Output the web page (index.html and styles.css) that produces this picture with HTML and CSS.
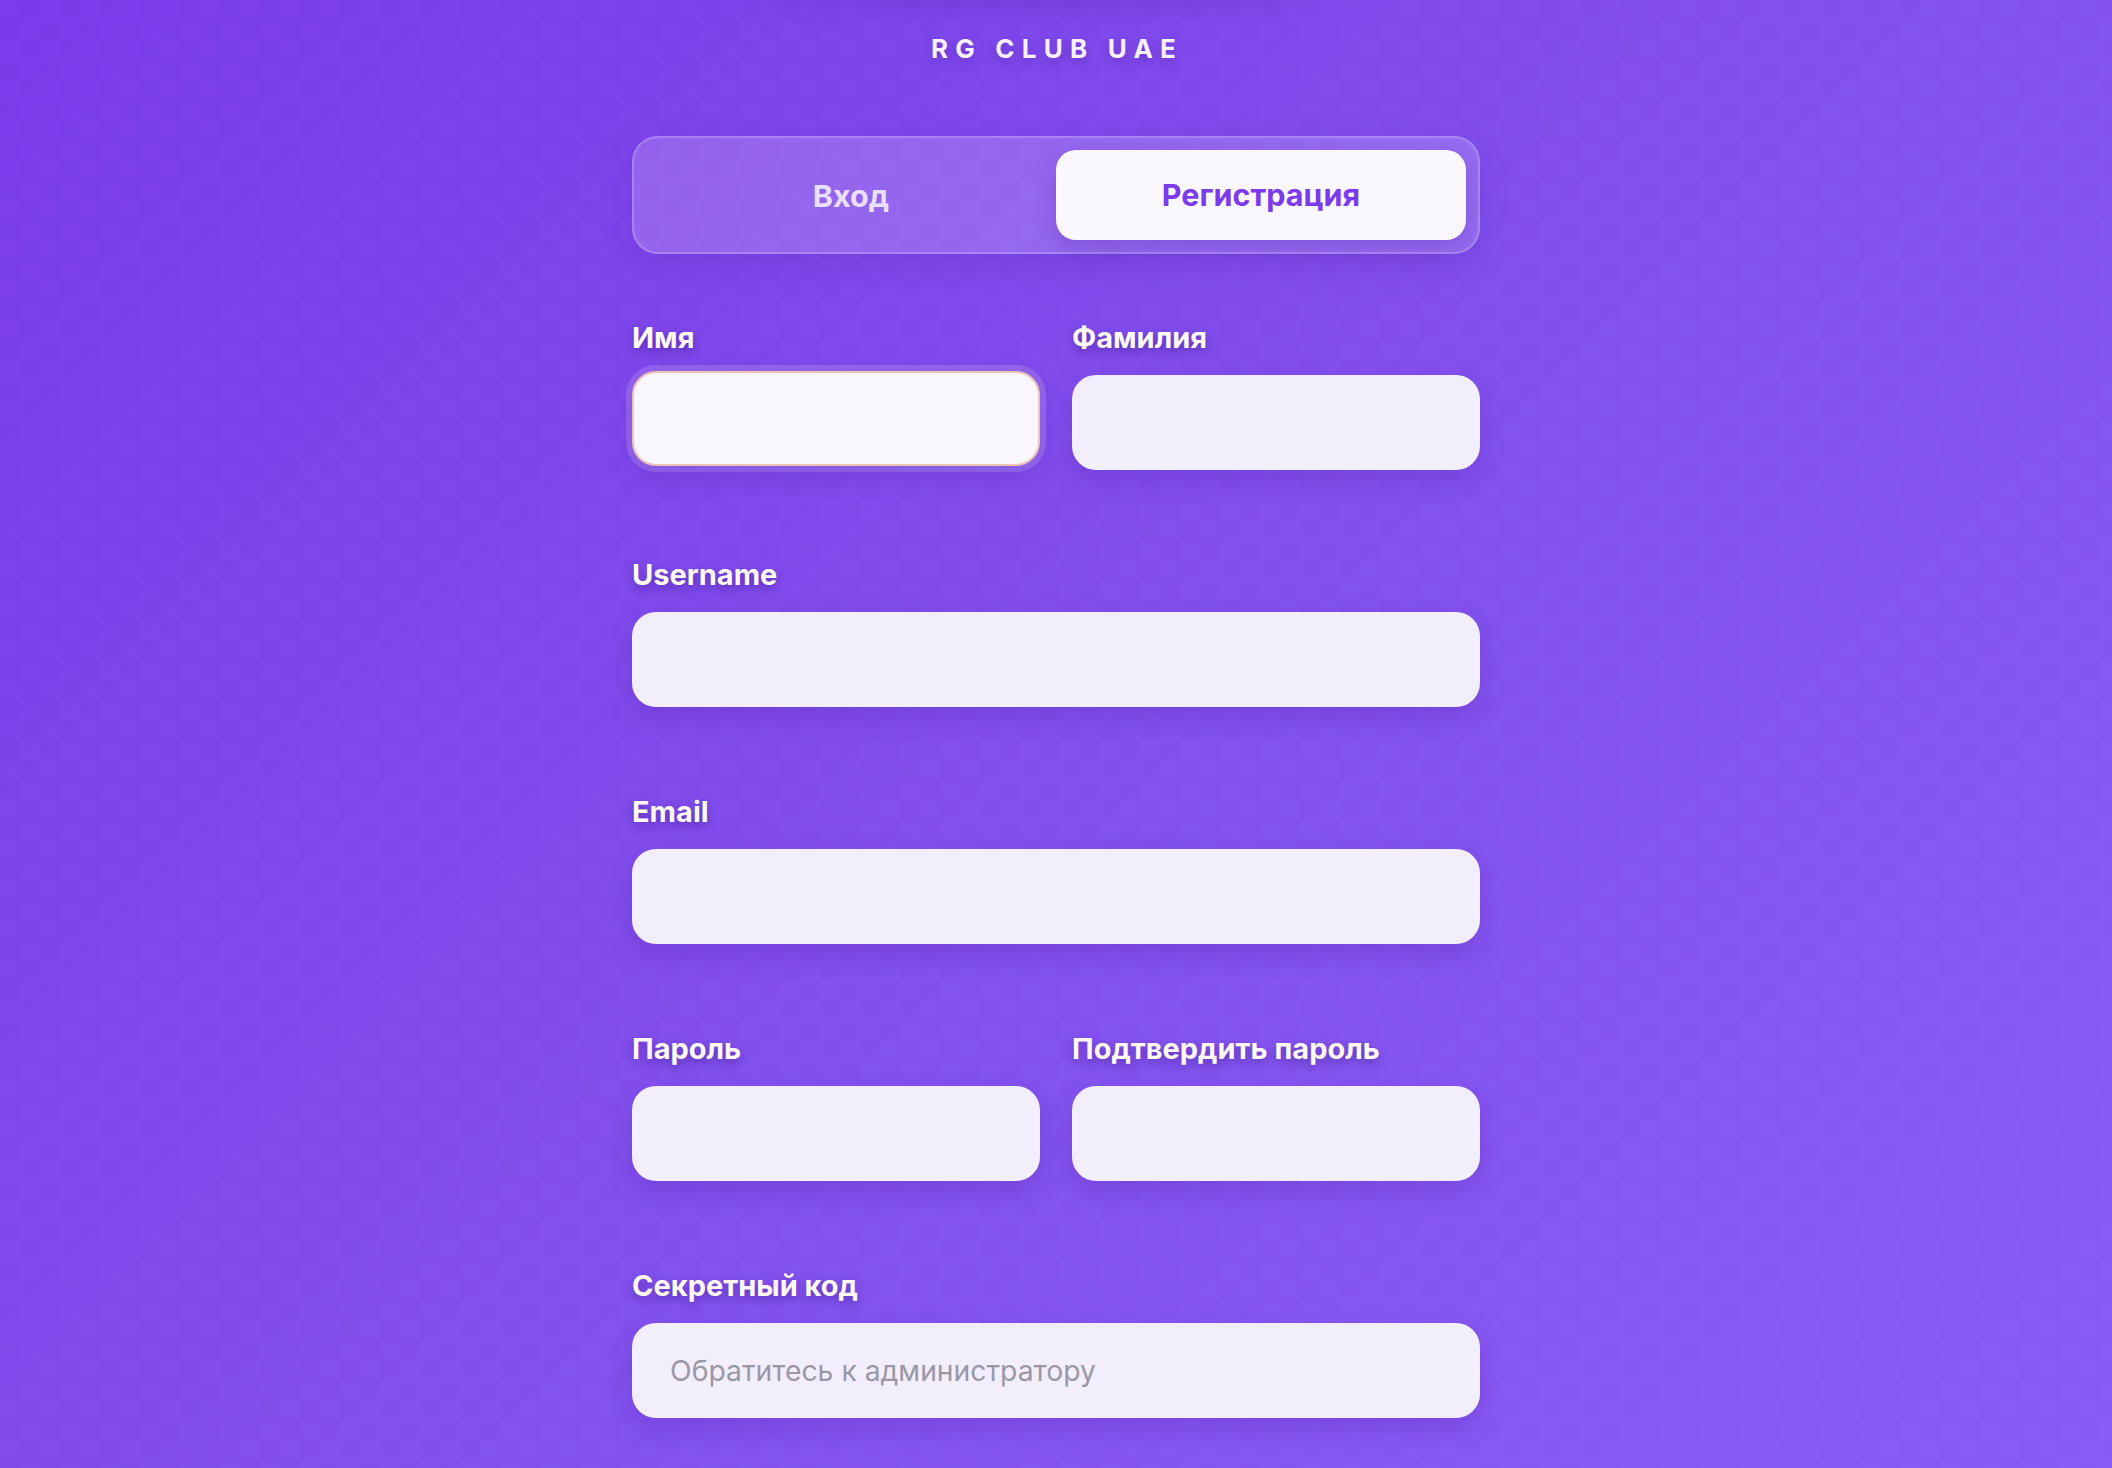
FILE: index.html
```html
<!DOCTYPE html>
<html lang="ru">
<head>
<meta charset="utf-8">
<title>RG CLUB UAE — Регистрация</title>
<link rel="stylesheet" href="styles.css">
</head>
<body>
<div class="page">
  <div class="top-glow"></div>
  <main class="auth">
    <div class="brand">RG CLUB UAE</div>
    <div class="tabs">
      <button class="tab">Вход</button>
      <button class="tab tab-active">Регистрация</button>
    </div>
    <form class="form">
      <div class="row two">
        <div class="field">
          <label class="label">Имя</label>
          <input class="input input-focus" type="text">
        </div>
        <div class="field">
          <label class="label">Фамилия</label>
          <input class="input" type="text">
        </div>
      </div>
      <div class="row">
        <div class="field">
          <label class="label">Username</label>
          <input class="input" type="text">
        </div>
      </div>
      <div class="row">
        <div class="field">
          <label class="label">Email</label>
          <input class="input" type="email">
        </div>
      </div>
      <div class="row two">
        <div class="field">
          <label class="label">Пароль</label>
          <input class="input" type="password">
        </div>
        <div class="field">
          <label class="label">Подтвердить пароль</label>
          <input class="input" type="password">
        </div>
      </div>
      <div class="row">
        <div class="field">
          <label class="label">Секретный код</label>
          <input class="input" type="text" placeholder="Обратитесь к администратору">
        </div>
      </div>
    </form>
  </main>
</div>
</body>
</html>
```
FILE: styles.css
```css
* { box-sizing: border-box; }
html, body {
  margin: 0;
  padding: 0;
  height: 100%;
  overflow: hidden;
}
body {
  font-family: Inter, "Noto Sans", "Liberation Sans", sans-serif;
  background: linear-gradient(135deg, #7a3be9 0%, #8250ee 50%, #8b5cf6 100%);
}
.page {
  position: relative;
  min-height: 100%;
  background-image: repeating-conic-gradient(rgba(0,0,0,0.007) 0 25%, rgba(255,255,255,0.005) 0 50%);
  background-size: 40px 40px;
}
.top-glow {
  position: absolute;
  top: -40px;
  left: 760px;
  width: 560px;
  height: 44px;
  border-radius: 50%;
  background: rgba(60, 20, 140, 0.22);
  filter: blur(14px);
}
.auth {
  width: 848px;
  margin: 0 auto;
  padding-top: 33px;
}
.brand {
  text-align: center;
  color: #f6f0ff;
  font-size: 26px;
  line-height: 32px;
  font-weight: 700;
  letter-spacing: 7.2px;
  text-shadow: 0 4px 10px rgba(60, 20, 130, 0.35);
  margin-left: 2px;
}
.tabs {
  margin-top: 71px;
  display: grid;
  grid-template-columns: 1fr 1fr;
  padding: 12px;
  border: 2px solid rgba(255, 255, 255, 0.2);
  border-radius: 26px;
  background: rgba(255, 255, 255, 0.17);
  box-shadow: 0 10px 30px rgba(70, 25, 150, 0.15);
}
.tab {
  height: 90px;
  border: 0;
  border-radius: 20px;
  background: transparent;
  font-family: inherit;
  font-size: 30.5px;
  font-weight: 700;
  color: #ebe0fc;
  cursor: pointer;
}
.tab-active {
  background: #faf7fd;
  color: #7c3aed;
  padding-bottom: 3px;
  box-shadow: 0 8px 22px rgba(70, 25, 150, 0.25);
}
.form {
  margin-top: 67px;
  display: flex;
  flex-direction: column;
  gap: 88px;
}
.row {
  display: grid;
  grid-template-columns: 1fr;
}
.row.two {
  grid-template-columns: 1fr 1fr;
  column-gap: 32px;
}
.field {
  display: flex;
  flex-direction: column;
}
.label {
  font-size: 29px;
  line-height: 34px;
  font-weight: 700;
  color: #fdf8f2;
  margin-bottom: 20px;
  text-shadow: 0 4px 10px rgba(50, 15, 120, 0.45);
}
.input {
  height: 95px;
  width: 100%;
  border: 0;
  border-radius: 24px;
  background: #f3eefc;
  padding: 0 38px;
  font-family: inherit;
  font-size: 28.3px;
  color: #333;
  outline: none;
  box-shadow: 0 10px 24px rgba(70, 25, 150, 0.22);
}
.input::placeholder {
  color: #9a98a6;
}
.input-focus {
  background: #f9f6fd;
  border: 2px solid #eec2b4;
  transform: translateY(-4px);
  box-shadow: 0 0 0 6px rgba(255, 255, 255, 0.15), 0 10px 24px rgba(70, 25, 150, 0.22);
}
```
